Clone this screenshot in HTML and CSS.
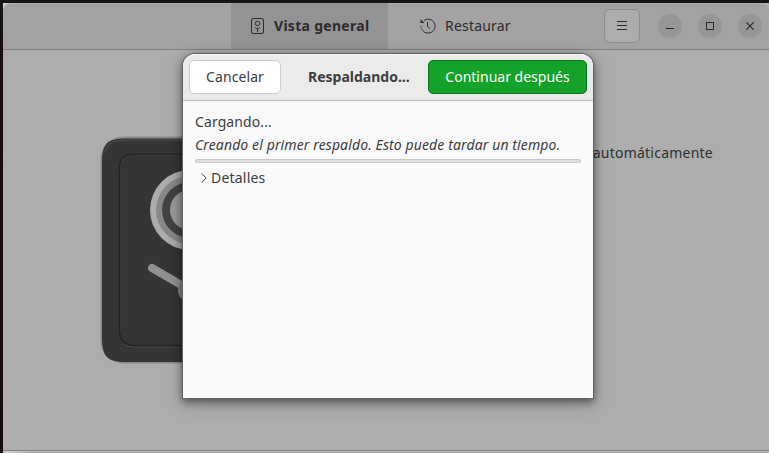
FILE: index.html
```html
<!DOCTYPE html>
<html lang="es">
<head>
<meta charset="utf-8">
<title>Respaldos</title>
<link rel="stylesheet" href="styles.css">
</head>
<body>
<main class="window">
  <header class="headerbar">
    <nav class="tabs">
      <div class="tab tab-active">
        <svg width="14" height="16" viewBox="0 0 14 16" fill="none" stroke="#2c2c2c"><rect x=".5" y=".5" width="12" height="15" rx="1.5"/><circle cx="6.500" cy="5.500" r="2.200"/><path d="M6.500 10.500v3.500M4.200 9.500l2.300 1.900 2.300-1.900"/></svg>
        <span class="label-general">Vista general</span>
      </div>
      <div class="tab">
        <svg width="16" height="16" viewBox="0 0 16 16" fill="none" stroke="#2c2c2c"><path d="M3.800 2.600A7 7 0 1 1 2.500 12.300"/><path d="M2.300 12.100A7 7 0 0 1 1 7" stroke-dasharray="1.500 1"/><path d="M7.500 4v4.500l2.500 1.800"/><path d="M.5 1.300v3.700h4z" fill="#2c2c2c" stroke="none"/></svg>
        <span class="label-restore">Restaurar</span>
      </div>
    </nav>
    <div class="controls">
      <div class="menu-button"><svg width="10" height="10" viewBox="0 0 10 10"><path d="M0 .5h10M0 4.500h10M0 8.500h10" stroke="#2a2a2a"/></svg></div>
      <div class="control"><svg width="8" height="8" viewBox="0 0 8 8"><path d="M0 6.500h8" stroke="#2a2a2a"/></svg></div>
      <div class="control"><svg width="8" height="8" viewBox="0 0 8 8"><rect x=".5" y=".5" width="7" height="7" fill="none" stroke="#2a2a2a"/></svg></div>
      <div class="control"><svg width="8" height="8" viewBox="0 0 8 8"><path d="M.3.3l7.400 7.400M7.700.3L.3 7.700" stroke="#2a2a2a" stroke-width="1.200"/></svg></div>
    </div>
  </header>
  <section class="content">
    <svg class="safe" width="230" height="230" viewBox="0 0 230 230">
      <rect x="0" y="0" width="229" height="228" rx="24" fill="#000" opacity=".1"/>
      <rect x="1" y="1" width="227" height="226" rx="23" fill="#888"/>
      <path d="M25 2.500H204C222 2.500 227 8 227 26V202C227 220 222 226 204 226H25C7 226 2 220 2 202V26C2 8 7 2.500 25 2.500Z" fill="#353535"/>
      <path d="M5 17C8 6 14 4.200 26 4.200H204" fill="none" stroke="#505050"/>
      <path d="M36 19.500H194C207 19.500 210 23 210 36V194C210 207 207 211 194 211H36C23 211 20 207 20 194V36C20 23 23 19.500 36 19.500Z" fill="none" stroke="#494949"/>
      <path d="M36 18.500H194C207 18.500 210 21 210 34V192C210 205 207 209.500 194 209.500H36C23 209.500 19.500 205 19.500 192V34C19.500 21 23 18.500 36 18.500Z" fill="none" stroke="#242424" stroke-width="1.500"/>
      <circle cx="90" cy="74" r="40" fill="#acacac"/><circle cx="90" cy="74" r="34" fill="#888"/><circle cx="90" cy="74" r="28" fill="#424242"/><circle cx="90" cy="74" r="20" fill="#999"/>
      <path d="M52 132L90 154" stroke="#919191" stroke-width="8" stroke-linecap="round"/>
      <circle cx="91" cy="154" r="13" fill="#868686"/>
    </svg>
    <p class="backup-hint">automáticamente</p>
  </section>
</main>
<section class="dialog">
  <header class="dialog-header">
    <button class="button cancel"><span>Cancelar</span></button>
    <h1 class="title">Respaldando...</h1>
    <button class="button primary"><span>Continuar después</span></button>
  </header>
  <div class="dialog-body">
    <p class="status">Cargando...</p>
    <p class="detail">Creando el primer respaldo. Esto puede tardar un tiempo.</p>
    <div class="progress"></div>
    <div class="expander"><svg width="6" height="10" viewBox="0 0 6 10"><path d="M.7.5L5.200 5 .7 9.500" fill="none" stroke="#3d3d3d"/></svg><span>Detalles</span></div>
  </div>
</section>
</body>
</html>
```
FILE: styles.css
```css
* { box-sizing: border-box; }
body {
  margin: 0; width: 769px; height: 453px; overflow: hidden; position: relative;
  padding: 3px 0 0 3px;
  background: linear-gradient(#151515, #1b0b16 70px, #160811);
  font: 14px/20px "Noto Sans", "Open Sans", sans-serif;
  color: #3d3d3d;
}
p, h1 { margin: 0; font-size: inherit; white-space: nowrap; }
svg { display: block; flex: none; }
span { white-space: nowrap; }
.window {
  height: 450px; display: flex; flex-direction: column;
  background: linear-gradient(90deg, #d0d0d0, #b2b0b0 30px);
}
.headerbar {
  height: 47px; flex: none; display: flex; justify-content: space-between;
  padding-left: 228px; background: #a3a3a3; border-bottom: 1px solid #808080;
  border-radius: 8px 8px 0 0; box-shadow: inset 0 1px #adadad; color: #2c2c2c;
}
.tabs { display: flex; }
.tab { display: flex; align-items: center; padding-left: 32px; gap: 9px; }
.tab-active { width: 157px; padding-left: 20px; background: #939393; font-weight: 700; }
.label-general { letter-spacing: .29px; }
.label-restore { letter-spacing: .2px; }
.controls { display: flex; align-items: center; padding-right: 7px; gap: 16px; }
.menu-button {
  width: 36px; height: 34px; margin-right: 2px; border: 1px solid #8c8c8c;
  border-radius: 6px; background: #adadad; display: grid; place-items: center;
}
.control { width: 24px; height: 24px; border-radius: 50%; background: #969696; display: grid; place-items: center; }
.content {
  height: 401px; flex: none; display: flex; justify-content: space-between;
  padding: 86px 56px 0 97px; background: #adadad; border-bottom: 1px solid #858585;
}
.backup-hint { padding-top: 7px; color: #2f2f2f; letter-spacing: .23px; }
.dialog {
  position: absolute; left: 183px; top: 54px; width: 410px; height: 344px;
  border-radius: 12px 12px 0 0; background: #fafafa; overflow: hidden;
  box-shadow: 0 0 0 1px #606060, 0 3px 9px 1px rgba(0,0,0,.45), 0 5px 18px 1px rgba(0,0,0,.18);
}
.dialog-header {
  height: 47px; padding: 0 6px; display: flex; align-items: center; justify-content: space-between;
  background: #ebebeb; border-bottom: 1px solid #bdbdbd; box-shadow: inset 0 1px #fafafa;
}
.button {
  height: 34px; border: 1px solid #cdcdcd; border-radius: 5px; padding: 0;
  font: inherit; color: #3d3d3d; background: #fff;
}
.cancel { width: 92px; letter-spacing: .1px; }
.primary { width: 159px; color: #fff; background: #14a328; border-color: #0f751d; }
.title { font-weight: 700; width: 102px; margin-left: 9px; }
.dialog-body { padding: 11px 12px; }
.status { letter-spacing: .1px; }
.detail { margin-top: 3px; font-style: italic; letter-spacing: .115px; }
.progress { height: 4px; margin-top: 4px; border: 1px solid #c8c8c8; border-radius: 2px; background: #e1e1e1; }
.expander { display: flex; align-items: center; gap: 4px; margin-top: 5px; padding-left: 6px; letter-spacing: .2px; }
.expander svg { margin-top: -1px; }
```
